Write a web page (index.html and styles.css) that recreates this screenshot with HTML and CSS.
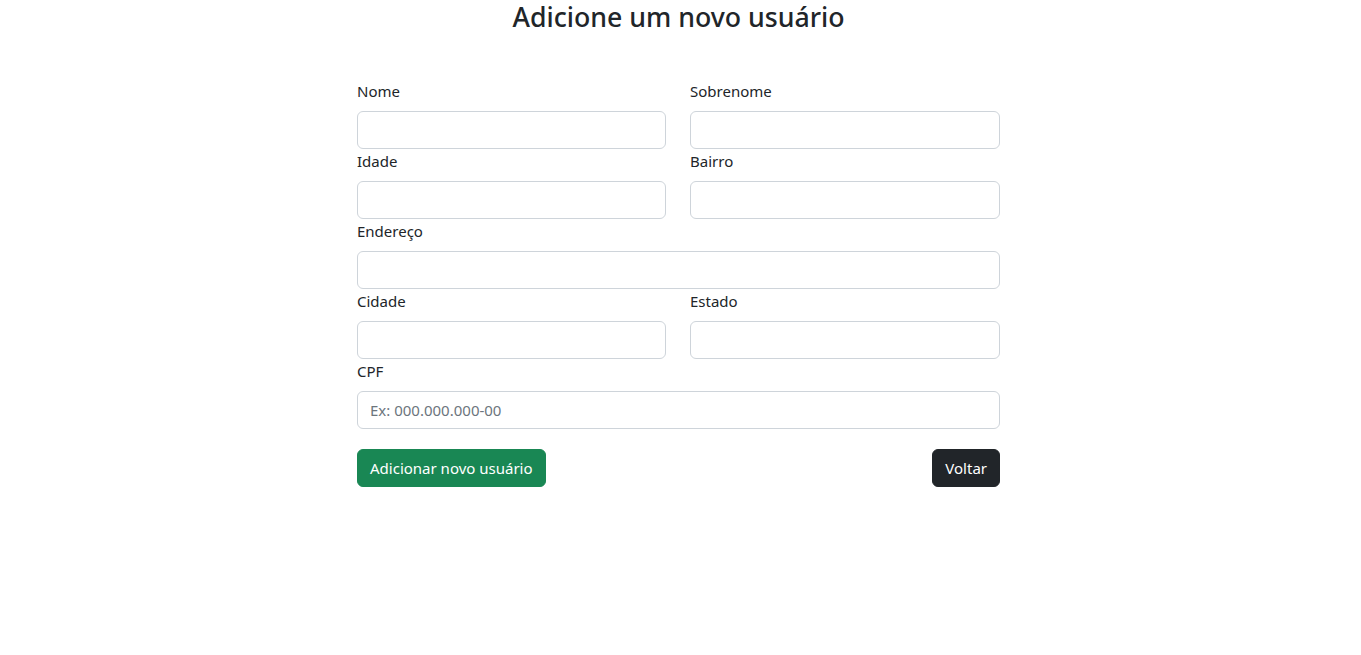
FILE: index.html
```html
<!DOCTYPE html>
<html lang="pt-BR">
<head>
<meta charset="utf-8">
<title>Adicione um novo usuário</title>
<link rel="stylesheet" href="styles.css">
</head>
<body>
<div class="page">
  <h3 class="title">Adicione um novo usuário</h3>
  <form class="form">
    <div class="grid">
      <div class="field">
        <label class="label">Nome</label>
        <input class="input" type="text">
      </div>
      <div class="field">
        <label class="label">Sobrenome</label>
        <input class="input" type="text">
      </div>
      <div class="field">
        <label class="label">Idade</label>
        <input class="input" type="text">
      </div>
      <div class="field">
        <label class="label">Bairro</label>
        <input class="input" type="text">
      </div>
      <div class="field full">
        <label class="label">Endereço</label>
        <input class="input" type="text">
      </div>
      <div class="field">
        <label class="label">Cidade</label>
        <input class="input" type="text">
      </div>
      <div class="field">
        <label class="label">Estado</label>
        <input class="input" type="text">
      </div>
      <div class="field full">
        <label class="label">CPF</label>
        <input class="input" type="text" placeholder="Ex: 000.000.000-00">
      </div>
    </div>
    <div class="actions">
      <button type="button" class="btn btn-green">Adicionar novo usuário</button>
      <button type="button" class="btn btn-dark">Voltar</button>
    </div>
  </form>
</div>
</body>
</html>
```
FILE: styles.css
```css
* { box-sizing: border-box; }
html, body { margin: 0; padding: 0; background: #fff; }
body {
  font-family: "Noto Sans", "Open Sans", sans-serif;
  color: #212529;
  font-size: 16px;
  line-height: 1.5;
}
.page {
  width: 643px;
  margin-left: 357px;
}
.title {
  margin: 0;
  font-size: 26.7px;
  font-weight: 500;
  line-height: 33px;
  text-align: center;
  height: 34px;
}
.form {
  margin-top: 45px;
}
.grid {
  display: grid;
  grid-template-columns: 309px 310px;
  column-gap: 24px;
}
.full { grid-column: 1 / -1; }
.field { display: flex; flex-direction: column; }
.label {
  display: block;
  height: 24px;
  line-height: 24px;
  margin-bottom: 8px;
  font-size: 15px;
}
.input {
  height: 38px;
  width: 100%;
  border: 1px solid #ced4da;
  border-radius: 6px;
  padding: 6px 12px;
  font-family: inherit;
  font-size: 15px;
  color: #212529;
  background: #fff;
}
.input::placeholder { color: #6c757d; }
.actions {
  margin-top: 20px;
  display: flex;
  justify-content: space-between;
}
.btn {
  height: 38px;
  padding: 0 12px;
  border: 1px solid transparent;
  border-radius: 6px;
  font-family: inherit;
  font-size: 15px;
  color: #fff;
  cursor: pointer;
}
.btn-green { background: #198754; border-color: #198754; }
.btn-dark { background: #212529; border-color: #212529; }
```
